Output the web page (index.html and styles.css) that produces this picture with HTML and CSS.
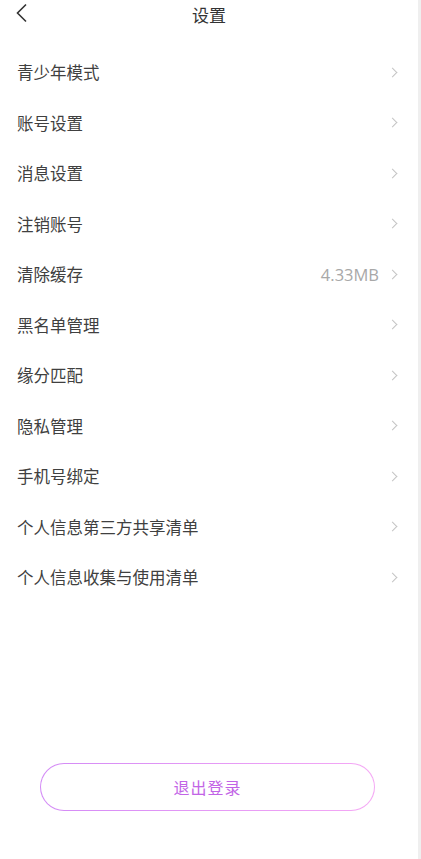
FILE: index.html
```html
<!DOCTYPE html>
<html lang="zh-CN">
<head>
  <meta charset="UTF-8" />
  <meta name="viewport" content="width=device-width, initial-scale=1.0"/>
  <title>设置</title>
  <link rel="stylesheet" href="styles.css">
</head>
<body>
  <div class="page">
    <div class="header">
      <span class="back">
        <svg width="14" height="20" viewBox="0 0 14 20"><path d="M11 1.5 L2.5 10 L11 18.5" fill="none" stroke="#333" stroke-width="1.6"/></svg>
      </span>
      <span class="title">设置</span>
    </div>

    <ul class="list">
      <li class="row"><span class="label">青少年模式</span><span class="arrow"></span></li>
      <li class="row"><span class="label">账号设置</span><span class="arrow"></span></li>
      <li class="row"><span class="label">消息设置</span><span class="arrow"></span></li>
      <li class="row"><span class="label">注销账号</span><span class="arrow"></span></li>
      <li class="row"><span class="label">清除缓存</span><span class="value">4.33MB</span><span class="arrow"></span></li>
      <li class="row"><span class="label">黑名单管理</span><span class="arrow"></span></li>
      <li class="row"><span class="label">缘分匹配</span><span class="arrow"></span></li>
      <li class="row"><span class="label">隐私管理</span><span class="arrow"></span></li>
      <li class="row"><span class="label">手机号绑定</span><span class="arrow"></span></li>
      <li class="row"><span class="label">个人信息第三方共享清单</span><span class="arrow"></span></li>
      <li class="row"><span class="label">个人信息收集与使用清单</span><span class="arrow"></span></li>
    </ul>

    <div class="logout-wrap">
      <button class="logout">退出登录</button>
    </div>
  </div>
</body>
</html>
```

FILE: styles.css
```css
* {
  margin: 0;
  padding: 0;
  box-sizing: border-box;
}

body {
  width: 421px;
  height: 859px;
  background: #fff;
  border-right: 3px solid #efefef;
  font-family: "Noto Sans CJK SC", "Noto Sans", sans-serif;
  color: #444;
  overflow: hidden;
}

.page {
  width: 418px;
}

.header {
  position: relative;
  height: 28px;
  display: flex;
  justify-content: center;
  align-items: center;
}

.back {
  position: absolute;
  left: 15px;
  top: 3px;
  display: flex;
}

.title {
  font-size: 17px;
  color: #333;
}

.list {
  list-style: none;
  margin-top: 19px;
}

.row {
  height: 50.5px;
  display: flex;
  align-items: center;
  padding: 0 22px 0 17px;
}

.label {
  flex: 1;
  font-size: 16.5px;
  color: #404040;
}

.value {
  font-size: 16.5px;
  color: #a8a8a8;
  font-family: "Open Sans", "Noto Sans", sans-serif;
  margin-right: 10px;
}

.arrow {
  width: 7px;
  height: 7px;
  border-top: 1.4px solid #c4c4c4;
  border-right: 1.4px solid #c4c4c4;
  transform: rotate(45deg);
}

.logout-wrap {
  margin-top: 160px;
  padding-left: 40px;
}

.logout {
  width: 335px;
  height: 48px;
  border-radius: 24px;
  border: 1.5px solid transparent;
  background: linear-gradient(#fff, #fff) padding-box,
    linear-gradient(90deg, #d38af6, #f5a8f5) border-box;
  font-family: "Noto Sans CJK SC", sans-serif;
  font-size: 16px;
  color: #c264e6;
  letter-spacing: 1px;
}
```
